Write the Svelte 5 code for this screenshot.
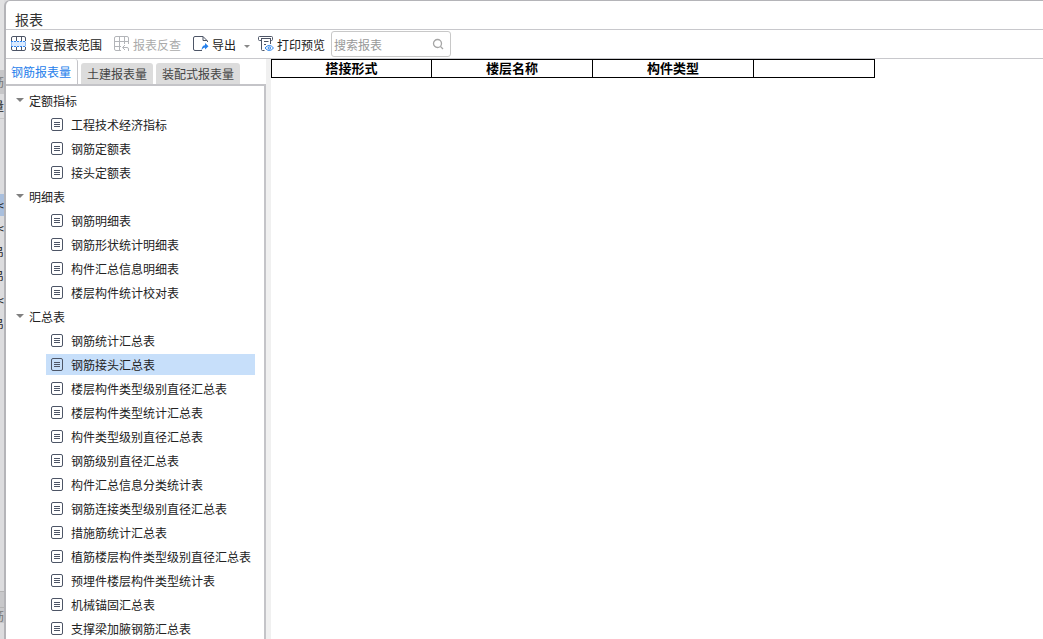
<script>
	let tabs = ['钢筋报表量', '土建报表量', '装配式报表量'];
	let activeTab = $state('钢筋报表量');
	let selected = $state('钢筋接头汇总表');
	let search = $state('');
	let closed = $state([]);

	const groups = [
		{
			title: '定额指标',
			items: ['工程技术经济指标', '钢筋定额表', '接头定额表']
		},
		{
			title: '明细表',
			items: ['钢筋明细表', '钢筋形状统计明细表', '构件汇总信息明细表', '楼层构件统计校对表']
		},
		{
			title: '汇总表',
			items: [
				'钢筋统计汇总表',
				'钢筋接头汇总表',
				'楼层构件类型级别直径汇总表',
				'楼层构件类型统计汇总表',
				'构件类型级别直径汇总表',
				'钢筋级别直径汇总表',
				'构件汇总信息分类统计表',
				'钢筋连接类型级别直径汇总表',
				'措施筋统计汇总表',
				'植筋楼层构件类型级别直径汇总表',
				'预埋件楼层构件类型统计表',
				'机械锚固汇总表',
				'支撑梁加腋钢筋汇总表'
			]
		}
	];

	// the main window behind the dialog, only a sliver of it shows
	const behind = [
		{ text: '', type: 'bar' },
		{ text: '筋', type: 'tab' },
		{ text: '量', type: 'row' },
		{ text: '', type: 'gap' },
		{ text: '<', type: 'row picked' },
		{ text: '<', type: 'row' },
		{ text: '吊', type: 'row' },
		{ text: '吊', type: 'row' },
		{ text: '<', type: 'row' },
		{ text: '吊', type: 'row' },
		{ text: '', type: 'fill' },
		{ text: '', type: 'foot' },
		{ text: '筋', type: 'foot' },
		{ text: '', type: 'end' }
	];

	function toggle(title) {
		closed = closed.includes(title) ? closed.filter(t => t != title) : [...closed, title];
	}
</script>

<div class="screen">
	<div class="behind" aria-hidden="true">
		{#each behind as part}
			<div class={part.type}><span>{part.text}</span></div>
		{/each}
	</div>

	<main>
		<h1>报表</h1>

		<div class="toolbar">
			<button class="tool">
				<svg width="16" height="16" viewBox="0 0 16 16" fill="none">
					<path d="M1 5H15V11H1z" fill="#d9eaff" />
					<path d="M.5 5V2Q.5.5 2 .5H13Q14.5.5 14.5 2V5M.5 11V13Q.5 14.5 2 14.5H13Q14.5 14.5 14.5 13V11M5.5.5V5M10.5.5V5M5.5 11V14.5M10.5 11V14.5" stroke="#4d5566" />
					<path d="M0 5.5H15M0 10.5H15" stroke="#3186f0" stroke-dasharray="2 1" />
					<path d="M.5 6V10M14.5 6V10" stroke="#8fb9ee" />
				</svg>
				设置报表范围
			</button>
			<button class="tool" disabled>
				<svg width="16" height="16" viewBox="0 0 16 16" fill="none" stroke="#b3b5b9">
					<path d="M7 14.5H2Q.5 14.5.5 13V2Q.5.5 2 .5H13Q14.5.5 14.5 2V8M.5 5.5H14.5M.5 10.5H7M5.5.5V14.5M10.5.5V8" />
					<path d="M11 9L8.5 11.5L11 14M9 11.5H13Q14.5 11.5 14.5 13V15" />
				</svg>
				报表反查
			</button>
			<button class="tool export">
				<svg width="16" height="16" viewBox="0 0 16 16" fill="none">
					<path d="M9 14.5H2Q.5 14.5.5 13V2Q.5.5 2 .5H10L14.5 5V6M10 .5V4.5H14" stroke="#4d5566" />
					<path d="M8.5 14Q9 9.5 12 9.3V7L15.5 10.3L12 13.5V11.5Q10 11.5 8.500 14z" fill="#2680eb" />
				</svg>
				导出
				<span class="more"></span>
			</button>
			<button class="tool print">
				<svg width="16" height="16" viewBox="0 0 16 16" fill="none">
					<path d="M3 4.5H1.5Q.5 4.5.5 3.5V1.5Q.5.5 1.5.5H13.5Q14.5.5 14.5 1.5V3.5Q14.5 4.5 13.5 4.5H12.5M3 2.5H13M3.5 3V13.5Q3.5 14.5 4.5 14.5H6.5M12.5 3V8M6 5.5H10.5M6 8.5H8" stroke="#4d5566" />
					<path d="M7 12Q11.300 6.800 15.500 12Q11.300 17 7 12z" fill="#fff" stroke="#2680eb" />
					<circle cx="11.300" cy="12" r="1.200" stroke="#2680eb" />
				</svg>
				打印预览
			</button>
			<div class="search">
				<input type="text" aria-label="搜索报表" placeholder="搜索报表" bind:value={search}>
				<svg width="12" height="12" viewBox="0 0 12 12" fill="none" stroke="#a6a6a6" stroke-width="1.300">
					<circle cx="5.500" cy="5.500" r="4" />
					<path d="M8.500 8.500L11 11" />
				</svg>
			</div>
		</div>

		<div class="content">
			<aside>
				<div class="tabs">
					{#each tabs as tab}
						<button class:active={tab == activeTab} onclick={() => activeTab = tab}>{tab}</button>
					{/each}
				</div>

				<div class="tree">
					{#each groups as group}
						<button class="group" class:closed={closed.includes(group.title)} onclick={() => toggle(group.title)}>
							<span class="arrow"></span>{group.title}
						</button>
						{#if !closed.includes(group.title)}
							{#each group.items as item}
								<button class="item" class:selected={item == selected} onclick={() => selected = item}>
									<svg width="12" height="13" viewBox="0 0 12 13" fill="none">
										<rect x=".5" y=".5" width="11" height="12" rx="1.500" stroke="#4d5566" />
										<path d="M3 4.500H9M3 6.500H9M3 8.500H9" stroke="#4d5566" />
									</svg>
									{item}
								</button>
							{/each}
						{/if}
					{/each}
				</div>
			</aside>

			<section>
				<table>
					<colgroup>
						<col class="first"><col class="wide"><col class="wide"><col class="narrow">
					</colgroup>
					<thead>
						<tr>
							<th>搭接形式</th>
							<th>楼层名称</th>
							<th>构件类型</th>
							<td></td>
						</tr>
					</thead>
				</table>
			</section>
		</div>
	</main>
</div>

<style>
	:global(body){
		overflow: hidden;
		background: #dcdcde;
	}

	.screen{
		display: flex;
		height: 100vh;
		overflow: hidden;
		font-family: "Noto Sans CJK SC", sans-serif;
		font-size: 12px;
		color: #222;
	}

	button{
		padding: 0;
		border: 0;
		background: none;
		font: inherit;
		color: inherit;
		white-space: nowrap;
	}

	svg{
		flex: none;
	}

	/* window behind */

	.behind{
		display: flex;
		flex-direction: column;
		flex: none;
		width: 4px;
		overflow: hidden;
		background: #dcdcde;
	}

	.behind div{
		display: flex;
		flex: none;
		justify-content: flex-end;
		height: 24px;
		line-height: 24px;
	}

	.behind .bar{
		height: 70px;
		background: #e2e2e3;
	}

	.behind .tab{
		background: #c6c6c8;
		color: #777;
	}

	.behind .gap{
		height: 76px;
		border-top: 1px solid #c8c8c8;
		box-sizing: border-box;
	}

	.behind .picked{
		height: 22px;
		background: #a9bfdd;
		line-height: 22px;
	}

	.behind .fill{
		flex: 1;
		height: auto;
	}

	.behind .foot{
		border-top: 1px solid #b5b5b5;
		box-sizing: border-box;
		height: 16px;
		line-height: 16px;
		background: #c8c8ca;
		color: #777;
	}

	.behind .end{
		height: 16px;
	}

	/* dialog */

	main{
		display: flex;
		flex-direction: column;
		flex: 1;
		min-width: 0;
		border-top: 1px solid #b4b4b8;
		border-left: 2px solid #b4b4b8;
		border-top-left-radius: 6px;
		background: #fff;
		overflow: hidden;
	}

	h1{
		flex: none;
		height: 28px;
		margin: 0;
		padding: 4px 9px 0;
		box-sizing: border-box;
		font-size: 14px;
		font-weight: normal;
		line-height: 28px;
		color: #333;
	}

	.toolbar{
		display: flex;
		flex: none;
		align-items: center;
		height: 28px;
		padding-left: 5px;
		border-top: 1px solid #c8c8cc;
		border-bottom: 1px solid #c8c8cc;
	}

	.tool{
		display: flex;
		align-items: center;
		gap: 3px;
		height: 28px;
		margin-right: 12px;
	}

	.tool:disabled{
		color: #aaa;
	}

	.more{
		margin: 4px 0 0 5px;
		border: 3px solid transparent;
		border-top-color: #888;
		border-bottom: 0;
	}

	.export{
		margin-right: 8px;
	}

	.print{
		margin-right: 6px;
	}

	.search{
		display: flex;
		align-items: center;
		width: 120px;
		height: 26px;
		padding: 0 6px 0 2px;
		box-sizing: border-box;
		border: 1px solid #c8c8c8;
		border-radius: 3px;
	}

	.search input{
		flex: 1;
		min-width: 0;
		padding: 0;
		border: 0;
		outline: none;
		background: none;
		font: inherit;
	}

	.search input::placeholder{
		color: #999;
		opacity: 1;
	}

	.content{
		display: flex;
		flex: 1;
		min-height: 0;
	}

	aside{
		display: flex;
		flex-direction: column;
		flex: none;
		width: 260px;
	}

	.tabs{
		display: flex;
		flex: none;
		align-items: flex-end;
		gap: 3px;
		height: 25px;
	}

	.tabs button{
		height: 21px;
		padding: 0 6px;
		border-radius: 3px 3px 0 0;
		background: #dcdcdc;
		color: #444;
		line-height: 21px;
	}

	.tabs .active{
		height: 25px;
		padding: 0 6px 0 5px;
		border-right: 1px solid #c4c4c8;
		background: #fff;
		color: #2680eb;
		line-height: 25px;
	}

	.tree{
		display: flex;
		flex-direction: column;
		flex: 1;
		min-height: 0;
		padding-top: 2px;
		border-top: 2px solid #c4c4c8;
		border-right: 2px solid #c4c4c8;
		overflow: hidden;
	}

	.group,
	.item{
		display: flex;
		flex: none;
		align-items: center;
		text-align: left;
	}

	.group{
		gap: 5px;
		height: 24px;
		padding-left: 10px;
	}

	.arrow{
		border: 4px solid transparent;
		border-top-color: #808080;
		border-bottom: 0;
	}

	.closed .arrow{
		transform: rotate(-90deg);
	}

	.item{
		gap: 8px;
		width: 209px;
		height: 21px;
		margin: 2px 0 1px 40px;
		padding-left: 5px;
	}

	.selected{
		background: #c7dffa;
	}

	section{
		flex: 1;
		min-width: 0;
		padding-left: 5px;
		background: linear-gradient(to right, #f0f0f0 5px, #fff 5px);
	}

	table{
		width: 604px;
		border-collapse: collapse;
		table-layout: fixed;
		font-size: 13px;
		color: #000;
	}

	.first{
		width: 160px;
	}

	.wide{
		width: 161px;
	}

	.narrow{
		width: 121px;
	}

	th,
	td{
		height: 17px;
		padding: 0;
		border: 1px solid #000;
		line-height: 16px;
		vertical-align: top;
	}
</style>
